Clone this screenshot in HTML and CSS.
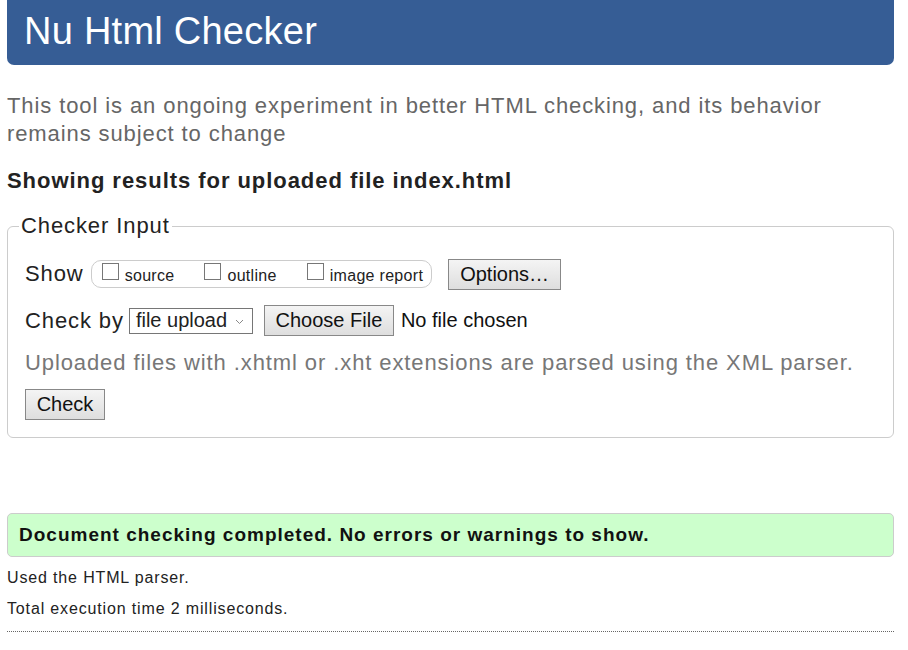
FILE: index.html
```html
<!DOCTYPE html>
<html>
<head>
<meta charset="utf-8">
<title>Nu Html Checker</title>
<link rel="stylesheet" href="styles.css">
</head>
<body>
<header class="masthead"><h1 class="title">Nu Html Checker</h1></header>
<p class="intro">This tool is an ongoing experiment in better HTML checking, and its behavior remains subject to change</p>
<h2 class="results-for">Showing results for uploaded file index.html</h2>
<fieldset class="checker">
  <legend class="legend">Checker Input</legend>
  <div class="row show-row">
    <span class="label label-show">Show</span>
    <span class="opts">
      <label class="opt"><span class="box"></span>source</label>
      <label class="opt"><span class="box"></span>outline</label>
      <label class="opt"><span class="box"></span>image report</label>
    </span>
    <button class="btn btn-options" type="button">Options…</button>
  </div>
  <div class="row by-row">
    <span class="label label-by">Check by</span>
    <span class="select">file upload<svg class="caret" width="9" height="6" viewBox="0 0 9 6"><path d="M1 1 L4.5 4.5 L8 1" fill="none" stroke="#888" stroke-width="1"/></svg></span>
    <button class="btn btn-file" type="button">Choose File</button>
    <span class="nofile">No file chosen</span>
  </div>
  <p class="hint">Uploaded files with .xhtml or .xht extensions are parsed using the XML parser.</p>
  <button class="btn btn-check" type="button">Check</button>
</fieldset>
<div class="success">Document checking completed. No errors or warnings to show.</div>
<p class="details">Used the HTML parser.</p>
<p class="details">Total execution time 2 milliseconds.</p>
<hr class="rule">
</body>
</html>
```
FILE: styles.css
```css
html, body { margin: 0; padding: 0; background: #fff; }
body {
  font-family: "Liberation Sans", Arial, sans-serif;
  color: #000;
  width: 887px;
  padding-left: 7px;
}
.masthead {
  background: #365d95;
  height: 65px;
  border-radius: 0 0 7px 7px;
  display: flex;
  align-items: center;
  padding-left: 17px;
}
.title {
  margin: 0;
  color: #fff;
  font-weight: normal;
  font-size: 38px;
  letter-spacing: 0.25px;
  line-height: 1;
  padding-bottom: 4px;
}
.intro {
  margin: 27px 0 0;
  color: #666;
  font-size: 22px;
  letter-spacing: 0.9px;
  line-height: 28px;
}
.results-for {
  margin: 19px 0 0;
  font-size: 22px;
  letter-spacing: 0.95px;
  line-height: 28px;
  color: #222;
}
.checker {
  margin: 17px 0 0;
  padding: 19px 17px 17px;
  border: 1px solid #ccc;
  border-radius: 6px;
  min-width: 0;
}
.legend {
  font-size: 22px;
  letter-spacing: 0.9px;
  padding: 0 2px;
  margin-left: -6px;
  line-height: 28px;
  color: #222;
}
.row {
  display: flex;
  align-items: center;
  font-size: 22px;
  color: #222;
}
.label { letter-spacing: 0.9px; }
.label-show { margin-right: 7px; }
.label-by { margin-right: 5px; }
.show-row { height: 32px; margin-top: -1px; }
.opts {
  display: flex;
  align-items: center;
  border: 1px solid #ccc;
  border-radius: 10px;
  height: 26px;
  padding: 0 8px 0 10px;
  font-size: 16px;
  letter-spacing: 0.3px;
  margin-right: 16px;
}
.opt {
  display: flex;
  align-items: center;
  gap: 6px;
  margin-right: 30px;
  padding-top: 3px;
}
.opt:last-child { margin-right: 0; }
.box {
  width: 17px;
  height: 17px;
  border: 1px solid #777;
  box-sizing: border-box;
  margin-top: -8px;
  background: #fff;
}
.btn {
  font-family: inherit;
  font-size: 20px;
  color: #111;
  background: linear-gradient(#f4f4f4, #dedede);
  border: 1px solid #888;
  border-radius: 0;
  padding: 0;
}
.btn-options { height: 31px; width: 113px; }
.by-row { margin-top: 15px; height: 31px; }
.select {
  display: flex;
  align-items: center;
  justify-content: space-between;
  width: 124px;
  height: 26px;
  box-sizing: border-box;
  border: 1px solid #767676;
  padding: 0 8px 0 6px;
  font-size: 20px;
  margin-right: 11px;
  background: #fff;
}
.caret { margin-top: 2px; }
.btn-file { height: 31px; width: 130px; margin-right: 7px; }
.nofile { font-size: 20px; color: #111; }
.hint {
  margin: 13px 0 0;
  font-size: 22px;
  letter-spacing: 0.9px;
  line-height: 28px;
  color: #777;
}
.btn-check {
  margin-top: 12px;
  height: 31px;
  width: 80px;
}
.success {
  margin-top: 75px;
  background: #ccffcc;
  border: 1px solid #ccc;
  border-radius: 5px;
  height: 42px;
  display: flex;
  align-items: center;
  padding-left: 11px;
  font-weight: bold;
  font-size: 19px;
  letter-spacing: 1px;
  color: #111;
}
.details {
  margin: 10px 0 0;
  font-size: 16px;
  letter-spacing: 0.85px;
  line-height: 21px;
  color: #222;
}
.rule {
  margin: 12px 0 0;
  border: 0;
  border-top: 1px dotted #666;
  height: 0;
}
```
